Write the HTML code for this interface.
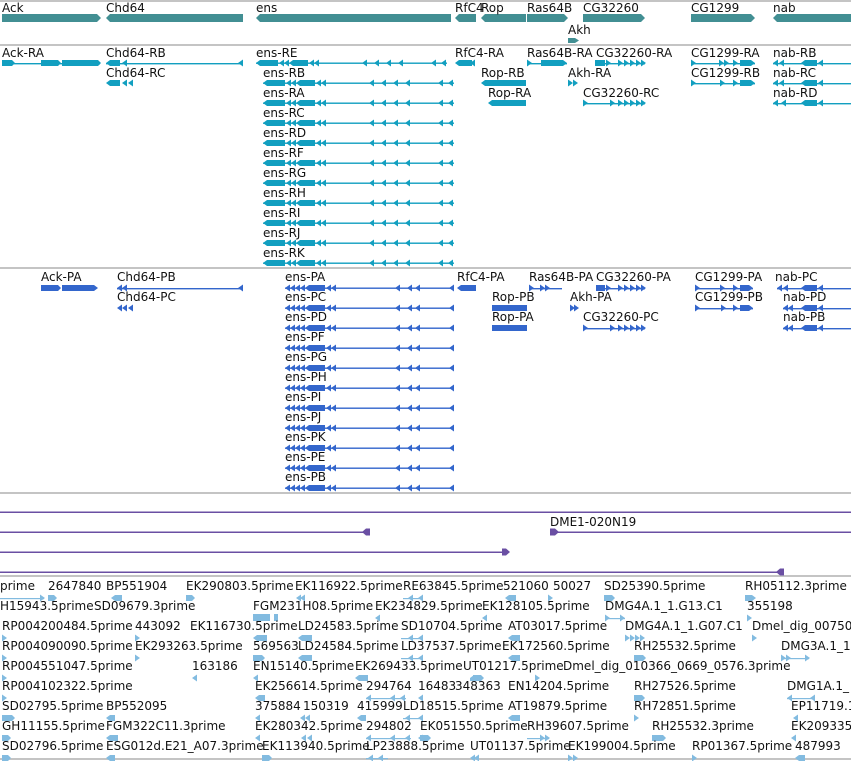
<!DOCTYPE html>
<html><head><meta charset="utf-8"><style>
html,body{margin:0;padding:0;background:#fff;width:851px;height:761px;overflow:hidden}
svg{display:block}
text{font-family:"DejaVu Sans","Liberation Sans",sans-serif;font-size:12px;fill:#111}
</style></head><body>
<svg width="851" height="761" viewBox="0 0 851 761" xmlns="http://www.w3.org/2000/svg">
<defs>
<path id="la" d="M0,0 L5,-3.5 L5,3.5 Z"/>
<path id="ra" d="M0,-3.5 L5,0 L0,3.5 Z"/>
<g id="ensT">
 <path d="M0,0 L4,-3 L22,-3 L22,3 L4,3 Z"/>
 <use href="#la" x="23"/><use href="#la" x="28"/>
 <path d="M33,0 L37,-3 L52,-3 L52,3 L37,3 Z"/>
 <use href="#la" x="53"/><use href="#la" x="58"/>
 <rect x="0" y="-0.5" width="191" height="1.4"/>
 <use href="#la" x="106"/><use href="#la" x="118"/><use href="#la" x="130"/><use href="#la" x="142"/><use href="#la" x="175"/><use href="#la" x="185"/>
</g>
<g id="ensP">
 <use href="#la" x="0"/><use href="#la" x="5"/><use href="#la" x="10"/><use href="#la" x="15"/>
 <path d="M20,0 L24,-3 L40,-3 L40,3 L24,3 Z"/>
 <use href="#la" x="41"/><use href="#la" x="46"/>
 <rect x="0" y="-0.5" width="169" height="1.4"/>
 <use href="#la" x="110"/><use href="#la" x="122"/><use href="#la" x="130"/><use href="#la" x="164"/>
</g>
</defs>
<g stroke="#c4c4c4" stroke-width="2">
<line x1="0" y1="1" x2="851" y2="1"/><line x1="0" y1="45" x2="851" y2="45"/><line x1="0" y1="268" x2="851" y2="268"/><line x1="0" y1="493" x2="851" y2="493"/><line x1="0" y1="576" x2="851" y2="576"/><line x1="0" y1="759" x2="851" y2="759"/>
</g>
<!-- genes -->
<g fill="#428f93">
<path d="M2,14 H97 L101,18 L97,22 H2 Z"/>
<path d="M110,14 H243 V22 H110 L106,18 Z"/>
<path d="M260,14 H451 V22 H260 L256,18 Z"/>
<path d="M459,14 H476 V22 H459 L455,18 Z"/>
<path d="M485,14 H526 V22 H485 L481,18 Z"/>
<rect x="527" y="14" width="37" height="8"/><path d="M564,14 L568,18 L564,22 Z"/>
<path d="M583,14 H641 L645,18 L641,22 H583 Z"/>
<path d="M691,14 H751 L755,18 L751,22 H691 Z"/>
<path d="M777,14 H851 V22 H777 L773,18 Z"/>
<path d="M568,38 H575 L579,40.5 L575,43 H568 Z"/>
</g>
<text x="2" y="12">Ack</text><text x="106" y="12">Chd64</text><text x="256" y="12">ens</text><text x="455" y="12">RfC4</text><text x="481" y="12">Rop</text><text x="527" y="12">Ras64B</text><text x="583" y="12">CG32260</text><text x="691" y="12">CG1299</text><text x="773" y="12">nab</text><text x="568" y="34">Akh</text>
<!-- transcripts -->
<g fill="#129fc0">
<rect x="2" y="63" width="98" height="1.4"/><path d="M2,60 H12 L15,63 L12,66 H2Z M41,60 H58 L61,63 L58,66 H41Z M62,60 H98 L101,63 L98,66 H62Z"/>
<rect x="106" y="63" width="137" height="1.4"/><path d="M106,63 L110,60 H120 V66 H110Z"/><use href="#la" x="122" y="63"/><use href="#la" x="238" y="63"/>
<path d="M106,83 L110,80 H120 V86 H110Z"/><use href="#la" x="122" y="83"/><use href="#la" x="128" y="83"/>
<use href="#ensT" x="256" y="63"/>
<use href="#ensT" x="263" y="83"/><use href="#ensT" x="263" y="103"/><use href="#ensT" x="263" y="123"/><use href="#ensT" x="263" y="143"/><use href="#ensT" x="263" y="163"/><use href="#ensT" x="263" y="183"/><use href="#ensT" x="263" y="203"/><use href="#ensT" x="263" y="223"/><use href="#ensT" x="263" y="243"/><use href="#ensT" x="263" y="263"/>
<path d="M455,63 L459,60 H472 V66 H459Z"/><use href="#la" x="470" y="63"/>
<path d="M481,83 L485,80 H526 V86 H485Z"/><path d="M488,103 L492,100 H526 V106 H492Z"/>
<rect x="527" y="63" width="40" height="1.4"/><use href="#ra" x="527" y="63"/><path d="M541,60 H563 L567,63 L563,66 H541Z"/>
<rect x="595" y="63" width="50" height="1.4"/><rect x="595" y="60" width="10" height="6"/><use href="#ra" x="606" y="63"/><use href="#ra" x="618" y="63"/><use href="#ra" x="624" y="63"/><use href="#ra" x="630" y="63"/><use href="#ra" x="636" y="63"/><use href="#ra" x="641" y="63"/>
<use href="#ra" x="568" y="83"/><use href="#ra" x="573" y="83"/>
<rect x="583" y="103" width="62" height="1.4"/><use href="#ra" x="583" y="103"/><use href="#ra" x="610" y="103"/><use href="#ra" x="618" y="103"/><use href="#ra" x="624" y="103"/><use href="#ra" x="630" y="103"/><use href="#ra" x="636" y="103"/><use href="#ra" x="641" y="103"/>
<rect x="691" y="63" width="64" height="1.4"/><use href="#ra" x="691" y="63"/><use href="#ra" x="719" y="63"/><use href="#ra" x="724" y="63"/><use href="#ra" x="733" y="63"/><path d="M740,60 H751 L755,63 L751,66 H740Z"/>
<rect x="691" y="83" width="64" height="1.4"/><use href="#ra" x="691" y="83"/><use href="#ra" x="720" y="83"/><use href="#ra" x="733" y="83"/><path d="M740,80 H751 L755,83 L751,86 H740Z"/>
<rect x="773" y="63" width="78" height="1.4"/><use href="#la" x="773" y="63"/><use href="#la" x="779" y="63"/><path d="M805,60 H817 V66 H805 L801,63Z"/><use href="#la" x="818" y="63"/>
<rect x="773" y="83" width="78" height="1.4"/><use href="#la" x="773" y="83"/><use href="#la" x="779" y="83"/><path d="M805,80 H817 V86 H805 L801,83Z"/><use href="#la" x="818" y="83"/>
<rect x="773" y="103" width="78" height="1.4"/><use href="#la" x="773" y="103"/><use href="#la" x="781" y="103"/><path d="M805,100 H817 V106 H805 L801,103Z"/><use href="#la" x="818" y="103"/>
</g>
<text x="2" y="57">Ack-RA</text><text x="106" y="57">Chd64-RB</text><text x="106" y="77">Chd64-RC</text><text x="256" y="57">ens-RE</text>
<text x="263" y="77">ens-RB</text><text x="263" y="97">ens-RA</text><text x="263" y="117">ens-RC</text><text x="263" y="137">ens-RD</text><text x="263" y="157">ens-RF</text><text x="263" y="177">ens-RG</text><text x="263" y="197">ens-RH</text><text x="263" y="217">ens-RI</text><text x="263" y="237">ens-RJ</text><text x="263" y="257">ens-RK</text>
<text x="455" y="57">RfC4-RA</text><text x="481" y="77">Rop-RB</text><text x="488" y="97">Rop-RA</text><text x="527" y="57">Ras64B-RA</text><text x="596" y="57">CG32260-RA</text><text x="568" y="77">Akh-RA</text><text x="583" y="97">CG32260-RC</text><text x="691" y="57">CG1299-RA</text><text x="691" y="77">CG1299-RB</text><text x="773" y="57">nab-RB</text><text x="773" y="77">nab-RC</text><text x="773" y="97">nab-RD</text>
<!-- proteins -->
<g fill="#3366cc">
<path d="M41,285 H58 L61,288 L58,291 H41Z M62,285 H94 L98,288 L94,291 H62Z"/>
<rect x="117" y="288" width="126" height="1.4"/><use href="#la" x="117" y="288"/><use href="#la" x="122" y="288"/><use href="#la" x="238" y="288"/>
<use href="#la" x="117" y="308"/><use href="#la" x="122" y="308"/><use href="#la" x="128" y="308"/>
<use href="#ensP" x="285" y="288"/><use href="#ensP" x="285" y="308"/><use href="#ensP" x="285" y="328"/><use href="#ensP" x="285" y="348"/><use href="#ensP" x="285" y="368"/><use href="#ensP" x="285" y="388"/><use href="#ensP" x="285" y="408"/><use href="#ensP" x="285" y="428"/><use href="#ensP" x="285" y="448"/><use href="#ensP" x="285" y="468"/><use href="#ensP" x="285" y="488"/>
<path d="M457,288 L461,285 H476 V291 H461Z"/>
<rect x="492" y="305" width="35" height="6"/><rect x="492" y="325" width="35" height="6"/>
<rect x="529" y="288" width="33" height="1.4"/><use href="#ra" x="529" y="288"/><use href="#ra" x="540" y="288"/><use href="#ra" x="545" y="288"/>
<rect x="596" y="288" width="49" height="1.4"/><rect x="596" y="285" width="9" height="6"/><use href="#ra" x="606" y="288"/><use href="#ra" x="618" y="288"/><use href="#ra" x="624" y="288"/><use href="#ra" x="630" y="288"/><use href="#ra" x="636" y="288"/><use href="#ra" x="641" y="288"/>
<use href="#ra" x="570" y="308"/><use href="#ra" x="574" y="308"/>
<rect x="583" y="328" width="62" height="1.4"/><use href="#ra" x="583" y="328"/><use href="#ra" x="610" y="328"/><use href="#ra" x="618" y="328"/><use href="#ra" x="624" y="328"/><use href="#ra" x="630" y="328"/><use href="#ra" x="636" y="328"/><use href="#ra" x="641" y="328"/>
<rect x="695" y="288" width="58" height="1.4"/><use href="#ra" x="695" y="288"/><use href="#ra" x="720" y="288"/><use href="#ra" x="733" y="288"/><path d="M740,285 H749 L753,288 L749,291 H740Z"/>
<rect x="695" y="308" width="58" height="1.4"/><use href="#ra" x="695" y="308"/><use href="#ra" x="721" y="308"/><use href="#ra" x="733" y="308"/><path d="M740,305 H749 L753,308 L749,311 H740Z"/>
<rect x="777" y="288" width="74" height="1.4"/><use href="#la" x="777" y="288"/><use href="#la" x="783" y="288"/><path d="M805,285 H817 V291 H805 L801,288Z"/><use href="#la" x="818" y="288"/>
<rect x="783" y="308" width="68" height="1.4"/><use href="#la" x="783" y="308"/><use href="#la" x="788" y="308"/><path d="M805,305 H817 V311 H805 L801,308Z"/><use href="#la" x="818" y="308"/>
<rect x="783" y="328" width="68" height="1.4"/><use href="#la" x="783" y="328"/><use href="#la" x="788" y="328"/><path d="M805,325 H817 V331 H805 L801,328Z"/><use href="#la" x="818" y="328"/>
</g>
<text x="41" y="281">Ack-PA</text><text x="117" y="281">Chd64-PB</text><text x="117" y="301">Chd64-PC</text>
<text x="285" y="281">ens-PA</text><text x="285" y="301">ens-PC</text><text x="285" y="321">ens-PD</text><text x="285" y="341">ens-PF</text><text x="285" y="361">ens-PG</text><text x="285" y="381">ens-PH</text><text x="285" y="401">ens-PI</text><text x="285" y="421">ens-PJ</text><text x="285" y="441">ens-PK</text><text x="285" y="461">ens-PE</text><text x="285" y="481">ens-PB</text>
<text x="457" y="281">RfC4-PA</text><text x="492" y="301">Rop-PB</text><text x="492" y="321">Rop-PA</text><text x="529" y="281">Ras64B-PA</text><text x="596" y="281">CG32260-PA</text><text x="570" y="301">Akh-PA</text><text x="583" y="321">CG32260-PC</text><text x="695" y="281">CG1299-PA</text><text x="695" y="301">CG1299-PB</text><text x="775" y="281">nab-PC</text><text x="783" y="301">nab-PD</text><text x="783" y="321">nab-PB</text>
<!-- purple -->
<g fill="#6a4fa3">
<rect x="0" y="511.5" width="851" height="1.5"/>
<rect x="0" y="531.5" width="366" height="1.5"/><path d="M362,532 L366,528.5 H370 V535.5 H366Z"/>
<rect x="550" y="531.5" width="301" height="1.5"/><path d="M550,528.5 H555 L559,532 L555,535.5 H550Z"/>
<rect x="0" y="551.5" width="506" height="1.5"/><path d="M502,548.5 H506 L510,552 L506,555.5 H502Z"/>
<rect x="0" y="571.5" width="780" height="1.5"/><path d="M776,572 L780,568.5 H784 V575.5 H780Z"/>
</g>
<text x="550" y="526">DME1-020N19</text>
<!-- ESTs -->
<g fill="#82bbe0">
<rect x="0" y="598" width="44" height="1.2"/><use href="#ra" x="40" y="598"/><path d="M48,595 H54 L57,598 L54,601 H48Z"/><path d="M111,598 L115,595 H122 V601 H115Z"/><path d="M186,595 H192 L195,598 L192,601 H186Z"/><use href="#la" x="296" y="598"/><use href="#la" x="300" y="598"/><rect x="403" y="598" width="20" height="1.2"/><use href="#la" x="408" y="598"/><use href="#la" x="418" y="598"/><path d="M505,598 L509,595 H516 V601 H509Z"/><use href="#ra" x="548" y="598"/><path d="M604,595 H612 L615,598 L612,601 H604Z"/><path d="M745,595 H752 L756,598 L752,601 H745Z"/>
<path d="M253,614 H270 V621 H253Z M274,614 H278 V621 H274Z"/><use href="#la" x="375" y="618"/><use href="#la" x="482" y="618"/><rect x="605" y="618" width="20" height="1.2"/><use href="#ra" x="605" y="618"/><use href="#ra" x="620" y="618"/><use href="#ra" x="747" y="618"/>
<use href="#ra" x="2" y="638"/><use href="#ra" x="135" y="638"/><path d="M253,638 L257,635 H267 V641 H257Z"/><path d="M298,638 L302,635 H312 V641 H302Z"/><rect x="401" y="638" width="22" height="1.2"/><use href="#la" x="408" y="638"/><use href="#la" x="418" y="638"/><path d="M508,638 L512,635 H520 V641 H512Z"/><use href="#ra" x="625" y="638"/><use href="#ra" x="630" y="638"/><use href="#ra" x="635" y="638"/><use href="#ra" x="640" y="638"/><use href="#ra" x="752" y="638"/>
<use href="#ra" x="2" y="658"/><use href="#ra" x="135" y="658"/><path d="M253,655 H262 L265,658 L262,661 H253Z"/><path d="M298,658 L302,655 H312 V661 H302Z"/><rect x="401" y="658" width="22" height="1.2"/><use href="#la" x="408" y="658"/><use href="#la" x="418" y="658"/><path d="M508,658 L512,655 H520 V661 H512Z"/><path d="M634,655 H643 L646,658 L643,661 H634Z"/><rect x="781" y="658" width="28" height="1.2"/><use href="#ra" x="781" y="658"/><use href="#ra" x="786" y="658"/><use href="#ra" x="805" y="658"/>
<use href="#ra" x="2" y="678"/><use href="#la" x="192" y="678"/><use href="#la" x="253" y="678"/><path d="M355,678 L359,675 H368 V681 H359Z"/><path d="M470,678 L474,675 H478 V681 H470Z M473,675 H481 L484,678 L481,681 H473Z"/><use href="#ra" x="535" y="678"/>
<use href="#ra" x="2" y="698"/><path d="M255,698 L259,695 H265 V701 H259Z"/><rect x="366" y="698" width="40" height="1.2"/><use href="#la" x="366" y="698"/><use href="#la" x="390" y="698"/><use href="#la" x="400" y="698"/><use href="#la" x="418" y="698"/><path d="M634,695 H642 L645,698 L642,701 H634Z"/><rect x="787" y="698" width="28" height="1.2"/><use href="#la" x="787" y="698"/><use href="#la" x="810" y="698"/>
<path d="M2,715 H12 L15,718 L12,721 H2Z"/><path d="M106,718 L110,715 H115 V721 H110Z"/><use href="#la" x="255" y="718"/><use href="#la" x="300" y="718"/><use href="#la" x="305" y="718"/><path d="M357,718 L361,715 H366 V721 H361Z"/><rect x="403" y="718" width="20" height="1.2"/><use href="#la" x="405" y="718"/><use href="#la" x="418" y="718"/><path d="M508,718 L512,715 H520 V721 H512Z"/><use href="#ra" x="634" y="718"/><use href="#la" x="793" y="718"/>
<path d="M2,735 H8 L11,738 L8,741 H2Z"/><path d="M106,738 L110,735 H118 V741 H110Z"/><use href="#la" x="255" y="738"/><use href="#la" x="301" y="738"/><use href="#la" x="307" y="738"/><rect x="366" y="738" width="45" height="1.2"/><use href="#la" x="366" y="738"/><use href="#la" x="390" y="738"/><use href="#la" x="405" y="738"/><use href="#la" x="418" y="738"/><path d="M420,735 H428 L431,738 L428,741 H420Z"/><rect x="527" y="738" width="22" height="1.2"/><use href="#ra" x="540" y="738"/><use href="#ra" x="545" y="738"/><path d="M652,735 H663 L666,738 L663,741 H652Z"/><use href="#la" x="791" y="738"/>
<path d="M2,755 H8 L11,758 L8,761 H2Z"/><path d="M106,758 L110,755 H115 V761 H110Z"/><path d="M262,755 H269 L272,758 L269,761 H262Z"/><rect x="366" y="758" width="22" height="1.2"/><use href="#la" x="368" y="758"/><use href="#la" x="378" y="758"/><use href="#la" x="470" y="758"/><use href="#la" x="474" y="758"/><use href="#ra" x="568" y="758"/><use href="#ra" x="573" y="758"/><use href="#ra" x="692" y="758"/><path d="M795,758 L799,755 H805 V761 H799Z"/>
</g>
<g>
<text x="0" y="590">prime</text><text x="48" y="590">2647840</text><text x="106" y="590">BP551904</text><text x="186" y="590">EK290803.5prime</text><text x="295" y="590">EK116922.5prime</text><text x="403" y="590">RE63845.5prime</text><text x="503" y="590">521060</text><text x="553" y="590">50027</text><text x="604" y="590">SD25390.5prime</text><text x="745" y="590">RH05112.3prime</text>
<text x="0" y="610">H15943.5prime</text><text x="94" y="610">SD09679.3prime</text><text x="253" y="610">FGM231H08.5prime</text><text x="375" y="610">EK234829.5prime</text><text x="482" y="610">EK128105.5prime</text><text x="605" y="610">DMG4A.1_1.G13.C1</text><text x="747" y="610">355198</text>
<text x="2" y="630">RP004200484.5prime</text><text x="135" y="630">443092</text><text x="190" y="630">EK116730.5prime</text><text x="298" y="630">LD24583.5prime</text><text x="401" y="630">SD10704.5prime</text><text x="508" y="630">AT03017.5prime</text><text x="625" y="630">DMG4A.1_1.G07.C1</text><text x="752" y="630">Dmel_dig_00750</text>
<text x="2" y="650">RP004090090.5prime</text><text x="135" y="650">EK293263.5prime</text><text x="253" y="650">569563</text><text x="298" y="650">LD24584.5prime</text><text x="401" y="650">LD37537.5prime</text><text x="502" y="650">EK172560.5prime</text><text x="634" y="650">RH25532.5prime</text><text x="781" y="650">DMG3A.1_1</text>
<text x="2" y="670">RP004551047.5prime</text><text x="192" y="670">163186</text><text x="253" y="670">EN15140.5prime</text><text x="355" y="670">EK269433.5prime</text><text x="463" y="670">UT01217.5prime</text><text x="563" y="670">Dmel_dig_010366_0669_0576.3prime</text>
<text x="2" y="690">RP004102322.5prime</text><text x="255" y="690">EK256614.5prime</text><text x="366" y="690">294764</text><text x="418" y="690">16483</text><text x="455" y="690">348363</text><text x="508" y="690">EN14204.5prime</text><text x="634" y="690">RH27526.5prime</text><text x="787" y="690">DMG1A.1_</text>
<text x="2" y="710">SD02795.5prime</text><text x="106" y="710">BP552095</text><text x="255" y="710">375884</text><text x="303" y="710">150319</text><text x="357" y="710">415999</text><text x="403" y="710">LD18515.5prime</text><text x="508" y="710">AT19879.5prime</text><text x="634" y="710">RH72851.5prime</text><text x="791" y="710">EP11719.1</text>
<text x="2" y="730">GH11155.5prime</text><text x="106" y="730">FGM322C11.3prime</text><text x="255" y="730">EK280342.5prime</text><text x="366" y="730">294802</text><text x="420" y="730">EK051550.5prime</text><text x="527" y="730">RH39607.5prime</text><text x="652" y="730">RH25532.3prime</text><text x="791" y="730">EK209335</text>
<text x="2" y="750">SD02796.5prime</text><text x="106" y="750">ESG012d.E21_A07.3prime</text><text x="262" y="750">EK113940.5prime</text><text x="366" y="750">LP23888.5prime</text><text x="470" y="750">UT01137.5prime</text><text x="568" y="750">EK199004.5prime</text><text x="692" y="750">RP01367.5prime</text><text x="795" y="750">487993</text>
</g>
</svg>
</body></html>
